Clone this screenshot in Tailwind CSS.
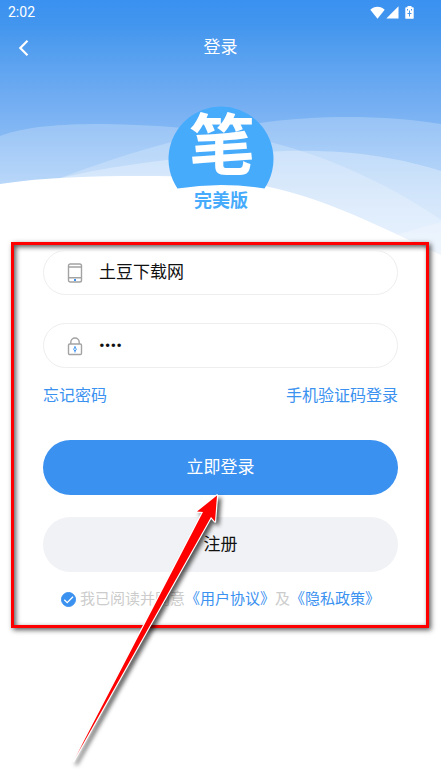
<!DOCTYPE html>
<html lang="zh-CN">
<head>
  <meta charset="UTF-8" />
  <meta name="viewport" content="width=device-width, initial-scale=1.0"/>
  <title>登录</title>
  <script src="https://cdn.jsdelivr.net/npm/@tailwindcss/browser@4"></script>
</head>
<body class="relative min-h-screen overflow-x-hidden bg-white font-['Roboto','Noto_Sans_CJK_SC',sans-serif] text-[17px] text-[#111111]">

  <!-- Sky and hills -->
  <svg class="absolute inset-x-0 top-0 -z-10 h-[260px] w-full" viewBox="0 0 441 260" preserveAspectRatio="none" aria-hidden="true">
    <defs>
      <linearGradient id="sky" x1="0" y1="0" x2="0" y2="1">
        <stop offset="0" stop-color="#3a91f0"/>
        <stop offset="0.1" stop-color="#4396ee"/>
        <stop offset="0.24" stop-color="#5ba2f0"/>
        <stop offset="0.4" stop-color="#74aef2"/>
        <stop offset="0.54" stop-color="#88bbf5"/>
        <stop offset="0.75" stop-color="#acd0f8"/>
        <stop offset="1" stop-color="#d4e6fc"/>
      </linearGradient>
    </defs>
    <rect width="441" height="260" fill="url(#sky)"/>
    <path d="M0 136C30 125 70 124 105 124C160 125 215 129 270 142C335 158 400 191 441 220V260H0Z" fill="#fff" fill-opacity="0.22"/>
    <path d="M60 178C120 155 190 134 260 123C325 114 390 116 441 124V260H60Z" fill="#fff" fill-opacity="0.22"/>
    <path d="M60 178C120 164 200 154 285 151C350 149 400 158 441 171V260H60Z" fill="#fff" fill-opacity="0.3"/>
    <path d="M380 240C400 234 420 228 441 222V260H380Z" fill="#fff" fill-opacity="0.2"/>
    <path d="M0 184C45 177 95 176 140 176C190 176 235 178 278 189C335 203 385 229 441 255V260H0Z" fill="#fff"/>
  </svg>

  <!-- Status bar -->
  <div class="flex h-6 items-center justify-between pl-2 pr-[27px] text-white">
    <span class="text-sm">2:02</span>
    <div class="flex items-center">
      <svg class="h-[13px] w-[15px]" viewBox="0 0 15 13" fill="currentColor" aria-hidden="true"><path d="M7.5 12.7L.3 3.8C2.3 1.8 4.8.7 7.5.7s5.200 1.100 7.200 3.100Z"/></svg>
      <svg class="ml-px h-[13px] w-[13px]" viewBox="0 0 13 13" fill="currentColor" aria-hidden="true"><path d="M12.500 0.300V12.500H.300Z"/></svg>
      <svg class="ml-1.5 h-[13px] w-[9px]" viewBox="0 0 9 13" aria-hidden="true">
        <path d="M2.500 0h4v1.200h1.300q.900 0 .9.900v9.800q0 .9-.9.900H1.200q-.9 0-.9-.9V2.100q0-.9.900-.900H2.500Z" fill="#fff"/>
        <path d="M4.500 4.500v6M2.500 7.500h4M2.500 3v1.500M6.500 3v1.500" stroke="#4496ef" fill="none"/>
      </svg>
    </div>
  </div>

  <!-- Title bar -->
  <header class="grid h-12 grid-cols-[48px_1fr_48px] items-center text-white">
    <button type="button" aria-label="返回" class="flex h-full items-center pl-[18px]">
      <svg class="h-4 w-3" viewBox="0 0 12 16" fill="none" stroke="currentColor" stroke-width="2.200" aria-hidden="true"><path d="M9.500 .8L2.300 8l7.200 7.200"/></svg>
    </button>
    <h1 class="text-center">登录</h1>
  </header>

  <!-- Logo -->
  <svg class="mx-auto mt-[34px] h-[106px] w-[106px]" viewBox="0 0 106 106" font-family="'Noto Sans CJK SC', sans-serif" font-weight="700" text-anchor="middle" role="img" aria-label="笔 完美版">
    <path d="M9.500 82.500A52.500 52.500 0 1 1 96.500 82.500Q53 75.500 9.500 82.500Z" fill="#47abfc"/>
    <text x="54" y="63" font-size="66" fill="#fff">笔</text>
    <text x="53" y="101" font-size="18" fill="#47abfc">完美版</text>
  </svg>

  <!-- Login form, framed -->
  <main class="relative ml-[11px] mr-3 mt-[30px] border-[3px] border-[#ff0000] pb-3.5 pl-[29px] pr-7 pt-[5px] shadow-[2px_2px_5px_rgba(0,0,0,0.65),inset_2px_2px_5px_rgba(0,0,0,0.65)]">
    <form>
      <div class="flex h-[45px] items-center rounded-full border border-[#eeeeee] pl-[23px] pr-6">
        <label for="account" class="mr-4">
          <svg class="h-5 w-4" viewBox="0 0 16 20" fill="none" stroke="#a3a3a3" stroke-width="1.400" role="img" aria-label="账号">
            <rect x="1.500" y="1" width="13" height="18" rx="1.800"/>
            <path d="M1.500 4h13M1.500 14.800h13"/>
            <rect x="7" y="16" width="2" height="2" fill="#3a91f0" stroke="none"/>
          </svg>
        </label>
        <input id="account" type="text" value="土豆下载网" class="min-w-0 flex-1 outline-none"/>
      </div>

      <div class="mt-7 flex h-[45px] items-center rounded-full border border-[#eeeeee] pl-[23px] pr-6">
        <label for="password" class="mr-4">
          <svg class="h-5 w-4" viewBox="0 0 16 20" fill="none" stroke="#a3a3a3" stroke-width="1.400" role="img" aria-label="密码">
            <rect x="1.500" y="8" width="13" height="10.500" rx="1.200"/>
            <path d="M3.800 8V6.200a4.200 4.200 0 0 1 8.400 0V8"/>
            <path d="M8 11l1.300 2.200L8 15.500l-1.300-2.300ZM8 10v1M8 15.500v1" stroke="#3a91f0" stroke-width="1"/>
          </svg>
        </label>
        <input id="password" type="password" value="1234" class="min-w-0 flex-1 outline-none"/>
      </div>

      <div class="mt-4 flex justify-between text-base text-[#3a91f0]">
        <a href="#forgot">忘记密码</a>
        <a href="#sms">手机验证码登录</a>
      </div>

      <button type="submit" class="mt-8 h-[55px] w-full rounded-full bg-[#3a91f0] text-white">立即登录</button>
      <button type="button" class="mt-[22px] h-[55px] w-full rounded-full bg-[#f1f2f5]">注册</button>

      <div class="mt-[15px] flex items-center justify-center gap-1 whitespace-nowrap text-[15px] leading-6 text-[#cccccc]">
        <span class="relative flex">
          <input id="agree" type="checkbox" checked class="peer size-[15px] appearance-none rounded-full border border-[#3a91f0] checked:bg-[#3a91f0]"/>
          <svg class="pointer-events-none absolute inset-0 hidden size-[15px] peer-checked:block" viewBox="0 0 15 15" fill="none" stroke="#fff" stroke-width="1.300" aria-hidden="true"><path d="M3.300 7.800l2.900 2.900 5.800-5.900"/></svg>
        </span>
        <p><label for="agree">我已阅读并同意</label><a href="#terms" class="text-[#3a91f0]">《用户协议》</a>及<a href="#privacy" class="text-[#3a91f0]">《隐私政策》</a></p>
      </div>
    </form>

    <!-- Pointer to the login button -->
    <svg class="pointer-events-none absolute right-1/2 top-[234px] h-[300px] w-40 overflow-visible drop-shadow-[3px_3px_2px_rgba(0,0,0,0.65)]" viewBox="60 480 160 300" aria-hidden="true">
      <defs>
        <linearGradient id="tail" gradientUnits="userSpaceOnUse" x1="73" y1="763" x2="83" y2="744">
          <stop offset="0" stop-color="#fff"/>
          <stop offset="1" stop-color="#ff0000"/>
        </linearGradient>
      </defs>
      <path d="M217 496.500L197 512.500L203 513L73.500 762L211 518L215 522.500Z" fill="url(#tail)" stroke="#fff" stroke-width="2.400" stroke-linejoin="round" paint-order="stroke"/>
    </svg>
  </main>

</body>
</html>
